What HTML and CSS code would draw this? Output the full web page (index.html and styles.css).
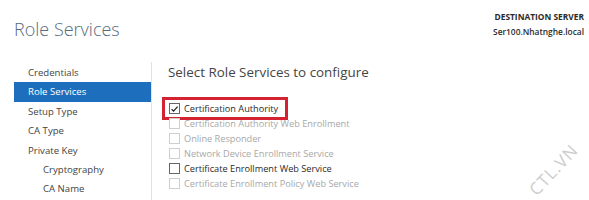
FILE: index.html
```html
<!DOCTYPE html>
<html>
<head>
<meta charset="utf-8">
<link rel="stylesheet" href="styles.css">
</head>
<body>
<div class="page">
  <div class="header">
    <h1 class="title">Role Services</h1>
    <div class="dest">
      <div class="dest-label">DESTINATION SERVER</div>
      <div class="dest-name">Ser100.Nhatnghe.local</div>
    </div>
  </div>
  <div class="main">
    <ul class="nav">
      <li class="nav-item">Credentials</li>
      <li class="nav-item active">Role Services</li>
      <li class="nav-item">Setup Type</li>
      <li class="nav-item">CA Type</li>
      <li class="nav-item">Private Key</li>
      <li class="nav-item sub">Cryptography</li>
      <li class="nav-item sub">CA Name</li>
    </ul>
    <div class="content">
      <h2 class="heading">Select Role Services to configure</h2>
      <ul class="options">
        <li class="option checked"><span class="box"><svg viewBox="0 0 10 10" width="10" height="10"><path d="M1.8 5.2 L4 7.4 L8.4 2.4" fill="none" stroke="#222" stroke-width="1.4"/></svg></span>Certification Authority<span class="highlight"></span></li>
        <li class="option disabled"><span class="box"></span>Certification Authority Web Enrollment</li>
        <li class="option disabled"><span class="box"></span>Online Responder</li>
        <li class="option disabled"><span class="box"></span>Network Device Enrollment Service</li>
        <li class="option"><span class="box"></span>Certificate Enrollment Web Service</li>
        <li class="option disabled"><span class="box"></span>Certificate Enrollment Policy Web Service</li>
      </ul>
    </div>
  </div>
  <div class="watermark">CTL.VN</div>
</div>
</body>
</html>
```

FILE: styles.css
```css
html, body {
  margin: 0;
  padding: 0;
  background: #ffffff;
}
body {
  font-family: "Open Sans", "Noto Sans", "Liberation Sans", sans-serif;
  color: #333;
}
.page {
  position: relative;
  width: 589px;
  height: 200px;
  overflow: hidden;
}
.header {
  display: flex;
  justify-content: space-between;
  align-items: flex-start;
  height: 62px;
}
.title {
  margin: 17px 0 0 14px;
  font-size: 18px;
  line-height: 24px;
  font-weight: 300;
  color: #566c80;
}
.dest {
  margin: 9px 5px 0 0;
  text-align: right;
  font-size: 8.4px;
  line-height: 15px;
  color: #2b2b2b;
}
.dest-label {
  font-weight: 700;
}
.dest-name {
  font-weight: 600;
}
.main {
  display: flex;
  height: 138px;
}
.nav {
  list-style: none;
  margin: 0 0 0 14px;
  padding: 1px 0 0 0;
  width: 137px;
  border-right: 1px solid #e2e2e2;
}
.nav-item {
  height: 19.4px;
  line-height: 19.4px;
  padding-left: 14px;
  font-size: 9.6px;
  color: #444;
}
.nav-item.active {
  background: #1d6fbd;
  color: #ffffff;
}
.nav-item.sub {
  padding-left: 29px;
}
.content {
  padding-left: 16px;
  flex: 1;
}
.heading {
  margin: 0;
  font-size: 13.4px;
  line-height: 20px;
  font-weight: 400;
  color: #444;
}
.options {
  list-style: none;
  margin: 19px 0 0 0;
  padding: 0 0 0 1px;
}
.option {
  position: relative;
  display: flex;
  align-items: center;
  height: 15px;
  font-size: 9.2px;
  color: #2a2a2a;
}
.option.disabled {
  color: #a8a8a8;
}
.box {
  box-sizing: border-box;
  width: 11px;
  height: 11px;
  border: 1px solid #666;
  margin-right: 4px;
  display: flex;
  align-items: center;
  justify-content: center;
  background: #fff;
}
.option.disabled .box {
  border-color: #cfcfcf;
}
.box svg {
  display: block;
}
.highlight {
  position: absolute;
  left: -7px;
  top: -4px;
  width: 126px;
  height: 23px;
  box-sizing: border-box;
  border: 3px solid #d42232;
}
.watermark {
  position: absolute;
  left: 522px;
  top: 158px;
  font-size: 17px;
  font-weight: 400;
  letter-spacing: 1px;
  color: #cdcdcd;
  transform: rotate(-47deg);
}
```
